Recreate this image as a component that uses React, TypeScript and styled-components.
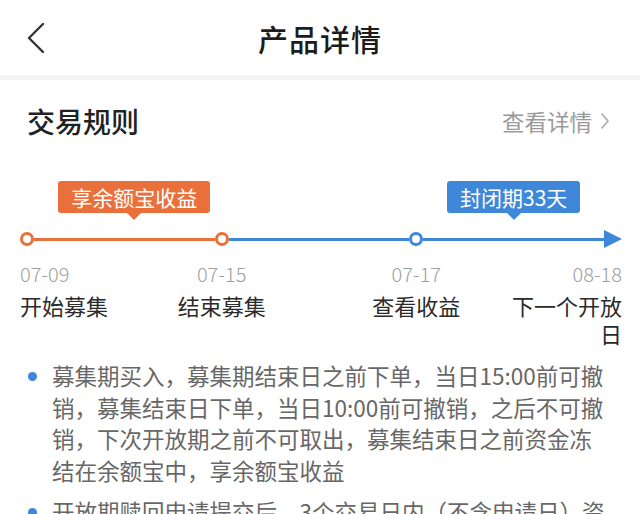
import React from 'react';
import styled, { createGlobalStyle } from 'styled-components';

const ORANGE = '#e9703a';
const BLUE = '#3f87d9';

const GlobalStyle = createGlobalStyle`
  html, body {
    margin: 0;
    padding: 0;
    background: #fff;
    font-family: "Noto Sans CJK SC", "Noto Sans", sans-serif;
    -webkit-font-smoothing: antialiased;
  }
`;

const Page = styled.div`
  width: 640px;
  height: 514px;
  overflow: hidden;
  background: #fff;
`;

const NavBar = styled.header`
  height: 75px;
  display: grid;
  grid-template-columns: 80px 1fr 80px;
  align-items: center;
`;

const BackButton = styled.button`
  border: 0;
  background: none;
  padding: 0 0 0 26px;
  display: flex;
  align-items: center;
  height: 40px;
  cursor: pointer;
`;

const NavTitle = styled.h1`
  margin: 0;
  text-align: center;
  font-size: 30px;
  font-weight: 500;
  color: #1c1c1c;
  letter-spacing: 1px;
`;

const Divider = styled.div`
  height: 5px;
  background: #f4f4f4;
`;

const SectionHead = styled.div`
  display: flex;
  align-items: center;
  justify-content: space-between;
  height: 36px;
  padding: 23px 30px 0 27px;
`;

const SectionTitle = styled.h2`
  margin: 0;
  font-size: 28px;
  font-weight: 500;
  color: #222;
`;

const MoreLink = styled.a`
  display: flex;
  align-items: center;
  gap: 8px;
  font-size: 22.5px;
  color: #9a9a9a;
`;

const Timeline = styled.div`
  padding: 42px 18px 0 20px;
`;

const Track = styled.div`
  display: grid;
  grid-template-columns: 14px 1fr 14px 1fr 14px 1fr 18px;
  align-items: center;
`;

const TagRow = styled(Track)`
  height: 32px;
  margin-bottom: 17px;
`;

const Tag = styled.div<{ $color: string; $col: number; $shift?: number }>`
  grid-column: ${(p) => p.$col};
  justify-self: center;
  margin-left: ${(p) => (p.$shift ?? 0) * 2}px;
  position: relative;
  height: 32px;
  line-height: 32px;
  padding: 0 13px;
  border-radius: 3px;
  background: ${(p) => p.$color};
  color: #fff;
  font-size: 21px;
  white-space: nowrap;

  &::after {
    content: '';
    position: absolute;
    left: 50%;
    bottom: -7px;
    margin-left: -7px;
    border-left: 7px solid transparent;
    border-right: 7px solid transparent;
    border-top: 7px solid ${(p) => p.$color};
  }
`;

const Dot = styled.span<{ $color: string }>`
  width: 14px;
  height: 14px;
  box-sizing: border-box;
  border: 3px solid ${(p) => p.$color};
  border-radius: 50%;
  background: #fff;
`;

const Segment = styled.span<{ $color: string }>`
  height: 3px;
  background: ${(p) => p.$color};
`;

const ArrowHead = styled.span`
  width: 0;
  height: 0;
  border-top: 9px solid transparent;
  border-bottom: 9px solid transparent;
  border-left: 18px solid ${BLUE};
`;

const StopRow = styled(Track)`
  margin-top: 11px;
  align-items: start;
`;

const Stop = styled.div<{ $from: number; $to: number; $align: 'start' | 'center' | 'end' }>`
  grid-column: ${(p) => `${p.$from} / ${p.$to}`};
  grid-row: 1;
  justify-self: ${(p) => p.$align};
  display: flex;
  flex-direction: column;
  align-items: ${(p) => (p.$align === 'start' ? 'flex-start' : p.$align === 'end' ? 'flex-end' : 'center')};
  text-align: ${(p) => (p.$align === 'start' ? 'left' : p.$align === 'end' ? 'right' : 'center')};
`;

const StopDate = styled.span`
  font-size: 20px;
  line-height: 29px;
  font-weight: 300;
  color: #a0a0a0;
`;

const StopLabel = styled.span`
  margin-top: 3px;
  font-size: 22px;
  line-height: 28px;
  color: #2a2a2a;
  max-width: 112px;
`;

const Rules = styled.ul`
  list-style: none;
  margin: 13px 0 0;
  padding: 0 0 0 28px;
`;

const Rule = styled.li`
  display: flex;
  align-items: flex-start;
  gap: 15px;
  margin-bottom: 10px;
`;

const Bullet = styled.span`
  flex: none;
  width: 9px;
  height: 9px;
  margin-top: 12px;
  border-radius: 50%;
  background: ${BLUE};
`;

const RuleText = styled.p`
  margin: 0;
  width: 556px;
  font-size: 22.5px;
  line-height: 31.5px;
  color: #676767;
`;

const stops = [
  { date: '07-09', label: '开始募集', from: 1, to: 3, align: 'start' as const },
  { date: '07-15', label: '结束募集', from: 2, to: 5, align: 'center' as const },
  { date: '07-17', label: '查看收益', from: 4, to: 7, align: 'center' as const },
  { date: '08-18', label: '下一个开放日', from: 6, to: 8, align: 'end' as const },
];

const rules = [
  '募集期买入，募集期结束日之前下单，当日15:00前可撤销，募集结束日下单，当日10:00前可撤销，之后不可撤销，下次开放期之前不可取出，募集结束日之前资金冻结在余额宝中，享余额宝收益',
  '开放期赎回申请提交后，3个交易日内（不含申请日）资金到账，到账前不享受收益',
];

const App = (): JSX.Element => {
  return (
    <Page>
      <GlobalStyle />
      <NavBar>
        <BackButton aria-label="返回">
          <svg width="20" height="32" viewBox="0 0 20 32" fill="none">
            <path d="M17 2 L3 16 L17 30" stroke="#333" strokeWidth="2.4" strokeLinecap="round" strokeLinejoin="round" />
          </svg>
        </BackButton>
        <NavTitle>产品详情</NavTitle>
        <span />
      </NavBar>
      <Divider />

      <SectionHead>
        <SectionTitle>交易规则</SectionTitle>
        <MoreLink>
          查看详情
          <svg width="10" height="18" viewBox="0 0 10 18" fill="none">
            <path d="M2 2 L8 9 L2 16" stroke="#a8a8a8" strokeWidth="1.6" strokeLinecap="round" strokeLinejoin="round" />
          </svg>
        </MoreLink>
      </SectionHead>

      <Timeline>
        <TagRow>
          <Tag $color={ORANGE} $col={2} $shift={10}>享余额宝收益</Tag>
          <Tag $color={BLUE} $col={6}>封闭期33天</Tag>
        </TagRow>
        <Track>
          <Dot $color={ORANGE} />
          <Segment $color={ORANGE} />
          <Dot $color={ORANGE} />
          <Segment $color={BLUE} />
          <Dot $color={BLUE} />
          <Segment $color={BLUE} />
          <ArrowHead />
        </Track>
        <StopRow>
          {stops.map((s) => (
            <Stop key={s.date} $from={s.from} $to={s.to} $align={s.align}>
              <StopDate>{s.date}</StopDate>
              <StopLabel>{s.label}</StopLabel>
            </Stop>
          ))}
        </StopRow>
      </Timeline>

      <Rules>
        {rules.map((r) => (
          <Rule key={r}>
            <Bullet />
            <RuleText>{r}</RuleText>
          </Rule>
        ))}
      </Rules>
    </Page>
  );
};

export default App;
